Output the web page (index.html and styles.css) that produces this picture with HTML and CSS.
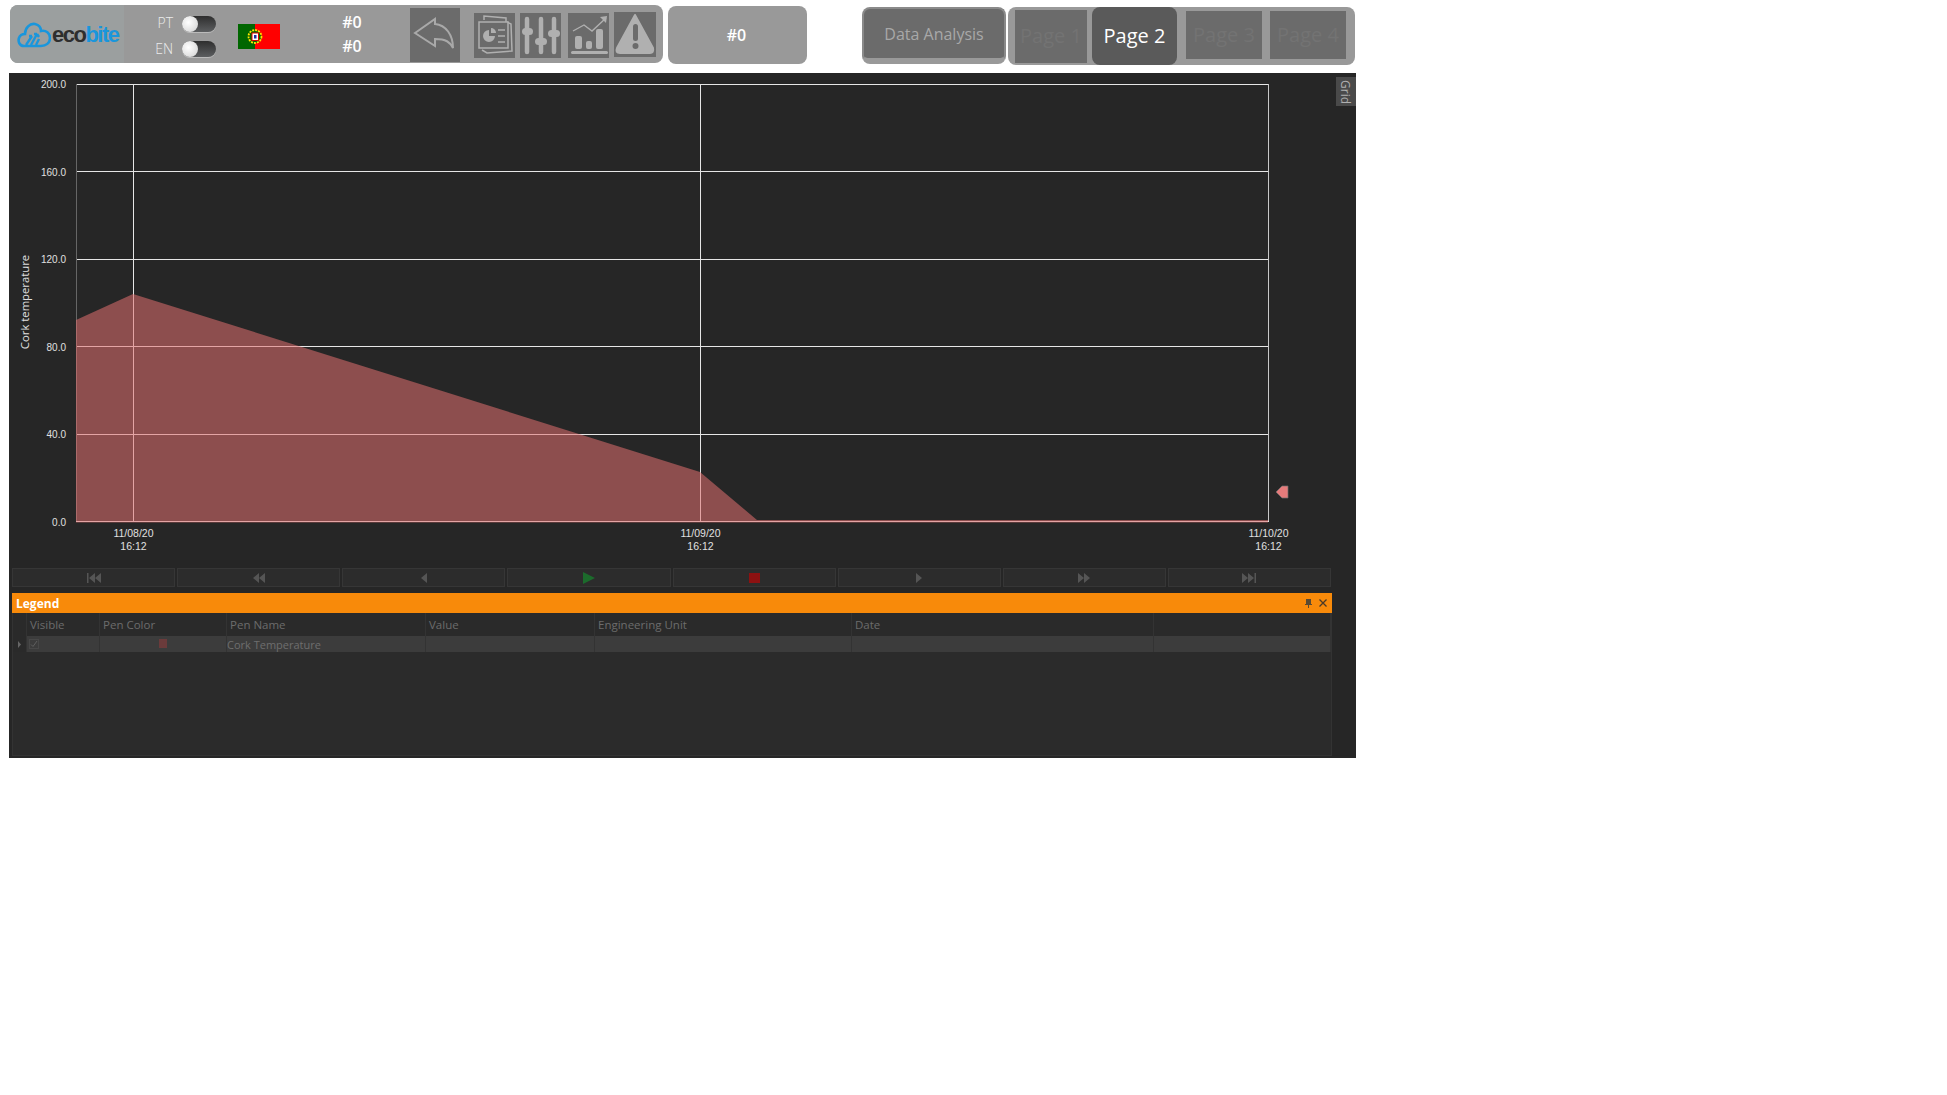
FILE: index.html
```html
<!DOCTYPE html>
<html lang="en">
<head>
    <meta charset="UTF-8">
    <title>Data Analysis</title>
    <link rel="stylesheet" href="styles.css">
</head>
<body>

    <div class="topbar">
        <div class="main-panel">
            <div class="logo">
                <svg class="cloud" width="34" height="26" viewBox="0 0 34 26">
                    <path d="M7 24 C2 24 1 19 2 16 C3 13 6 12 8 12 C8 6 13 1 18 2 C22 3 24 6 24 9 C29 8 33 11 33 16 C33 21 29 24 24 24 Z" fill="none" stroke="#1a96dc" stroke-width="2.6"/>
                    <path d="M9 23 L15 14 M14 23 L20 12 M19 23 L22 17 M15 14 L12 14 M20 12 L17 12 M20 12 L22 15" fill="none" stroke="#1a96dc" stroke-width="2.4"/>
                </svg>
                <span class="logo-text">eco<span class="logo-blue">bite</span></span>
            </div>

            <div class="lang">
                <span class="lang-label">PT</span><span class="toggle"></span>
                <span class="lang-label lang-label-en">EN</span><span class="toggle"></span>
            </div>

            <svg class="flag" width="42" height="25" viewBox="0 0 42 25">
                <rect width="42" height="25" fill="#ff0000"/>
                <rect width="17" height="25" fill="#006600"/>
                <circle cx="17" cy="12.500" r="6.500" fill="#006600" stroke="#ffe600" stroke-width="1.800" stroke-dasharray="2 1"/>
                <rect x="14" y="9" width="6.500" height="7.500" fill="#ffffff" stroke="#e00000"/>
                <rect x="16" y="11" width="2.500" height="3.500" fill="#2030a0"/>
            </svg>

            <div class="values">
                <span>#0</span>
                <span>#0</span>
            </div>

            <div class="tool tool-back">
                <svg width="50" height="54" viewBox="410 8 50 54">
                    <path d="M415 33 L435 19 L435 24 C446 25 453 35 453 48 C450 42 446 39 435 39 L435 46 Z" fill="none" stroke="#a9a9a9" stroke-width="2"/>
                </svg>
            </div>

            <div class="tool tool-slides">
                <svg width="41" height="45" viewBox="474 13 41 45">
                    <path d="M484 20 L484 16 L506 18 L506 22 M507 22 L511 24 L512 51 L487 53 L482 50" fill="none" stroke="#b0b0b0" stroke-width="1.5"/>
                    <rect x="479" y="22" width="29" height="26" fill="#6b6b6b" stroke="#b0b0b0" stroke-width="1.5"/>
                    <path d="M489 30 A6 6 0 1 0 495 36 L489 36 Z" fill="#b0b0b0"/>
                    <path d="M491 28 A5 5 0 0 1 496 33 L491 33 Z" fill="#b0b0b0"/>
                    <path d="M498 30 H505 M498 36 H505 M498 42 H505" stroke="#b0b0b0" stroke-width="1.5"/>
                </svg>
            </div>

            <div class="tool tool-sliders">
                <svg width="41" height="45" viewBox="520 13 41 45">
                    <path d="M527 19 V52 M541 19 V52 M554 19 V52" stroke="#b0b0b0" stroke-width="4.500" stroke-linecap="round"/>
                    <rect x="522" y="28" width="11" height="7" rx="3.500" fill="#b0b0b0"/>
                    <rect x="535" y="38" width="12" height="7" rx="3.500" fill="#b0b0b0"/>
                    <rect x="548" y="30" width="12" height="7" rx="3.500" fill="#b0b0b0"/>
                </svg>
            </div>

            <div class="tool tool-trend">
                <svg width="41" height="45" viewBox="568 13 41 45">
                    <path d="M573 31 L584 25 L592 31 L606 18" fill="none" stroke="#b0b0b0" stroke-width="1.400"/>
                    <path d="M600 17 L607 16 L606 23 Z" fill="#b0b0b0"/>
                    <rect x="575" y="36" width="7" height="13" rx="2" fill="#b0b0b0"/>
                    <rect x="586" y="41" width="6" height="8" rx="2" fill="#b0b0b0"/>
                    <rect x="596" y="29" width="7" height="20" rx="2" fill="#b0b0b0"/>
                    <rect x="571" y="51" width="37" height="3" rx="1.500" fill="#b0b0b0"/>
                </svg>
            </div>

            <div class="tool tool-warn">
                <svg width="42" height="45" viewBox="614 12 42 45">
                    <path d="M635 15 L653 48 Q654 53 650 53 L620 53 Q615 53 617 48 Z" fill="#b0b0b0" stroke="#b0b0b0" stroke-width="2" stroke-linejoin="round"/>
                    <rect x="633" y="24" width="5" height="17" rx="2.500" fill="#6b6b6b"/>
                    <circle cx="635.500" cy="46" r="3" fill="#6b6b6b"/>
                </svg>
            </div>
        </div>

        <div class="value-box">#0</div>

        <div class="analysis-btn">Data Analysis</div>

        <div class="pages">
            <div class="page page-1">Page 1</div>
            <div class="page page-active">Page 2</div>
            <div class="page page-3">Page 3</div>
            <div class="page page-4">Page 4</div>
        </div>
    </div>

    <div class="chart-panel">
        <div class="grid-tab">Grid</div>

        <svg class="chart" width="1347" height="490" viewBox="9 73 1347 490">
            <!-- grid lines -->
            <g stroke="#e6e6e6" stroke-width="1">
                <path d="M76 84.500 H1268 M76 171.500 H1268 M76 259.500 H1268 M76 346.500 H1268 M76 434.500 H1268"/>
                <path d="M133.500 84 V522 M700.500 84 V522"/>
            </g>
            <path d="M1268.500 84 V522" stroke="#c8c8c8"/>
            <path d="M76.500 84 V522" stroke="#666666"/>
            <path d="M76 521.500 H1269" stroke="#e6e6e6"/>

            <!-- pen area -->
            <polygon points="76,320 133,294 700,472 757,520 1268,520 1268,522.500 76,522.500" fill="#e27070" opacity="0.55"/>

            <polygon points="1276,492 1282,486 1288,486 1288,498 1282,498" fill="#e57b7b" stroke="#6e6e6e" stroke-width="0.7"/>

            <g class="y-labels">
                <text x="66" y="88">200.0</text>
                <text x="66" y="176">160.0</text>
                <text x="66" y="263">120.0</text>
                <text x="66" y="351">80.0</text>
                <text x="66" y="438">40.0</text>
                <text x="66" y="526">0.0</text>
            </g>

            <g class="x-labels">
                <text x="133.500" y="537">11/08/20</text>
                <text x="133.500" y="550">16:12</text>
                <text x="700.500" y="537">11/09/20</text>
                <text x="700.500" y="550">16:12</text>
                <text x="1268.500" y="537">11/10/20</text>
                <text x="1268.500" y="550">16:12</text>
            </g>

            <text class="y-title" transform="translate(28.500 302) rotate(-90)">Cork temperature</text>
        </svg>

        <div class="transport">
            <div class="transport-btn">
                <svg width="14" height="10" viewBox="0 0 14 10"><path d="M0 0 H1.500 V10 H0 Z M8 0 V10 L2 5 Z M14 0 V10 L8 5 Z" fill="#555555"/></svg>
            </div>
            <div class="transport-btn">
                <svg width="12" height="10" viewBox="0 0 12 10"><path d="M6 0 V10 L0 5 Z M12 0 V10 L6 5 Z" fill="#555555"/></svg>
            </div>
            <div class="transport-btn">
                <svg width="6" height="10" viewBox="0 0 6 10"><path d="M6 0 V10 L0 5 Z" fill="#555555"/></svg>
            </div>
            <div class="transport-btn">
                <svg width="12" height="12" viewBox="0 0 12 12"><path d="M0 0 L12 6 L0 12 Z" fill="#1c6b2c"/></svg>
            </div>
            <div class="transport-btn">
                <svg width="11" height="10" viewBox="0 0 11 10"><rect width="11" height="10" fill="#8c1111"/></svg>
            </div>
            <div class="transport-btn">
                <svg width="6" height="10" viewBox="0 0 6 10"><path d="M0 0 V10 L6 5 Z" fill="#555555"/></svg>
            </div>
            <div class="transport-btn">
                <svg width="12" height="10" viewBox="0 0 12 10"><path d="M0 0 V10 L6 5 Z M6 0 V10 L12 5 Z" fill="#555555"/></svg>
            </div>
            <div class="transport-btn">
                <svg width="14" height="10" viewBox="0 0 14 10"><path d="M0 0 V10 L6 5 Z M6 0 V10 L12 5 Z M12.500 0 H14 V10 H12.500 Z" fill="#555555"/></svg>
            </div>
        </div>

        <div class="legend">
            <div class="legend-title">
                <span>Legend</span>
                <svg class="legend-pin" width="7" height="9" viewBox="0 0 7 9"><path d="M1 0 H6 V5 H7 V6 H4 V9 H3 V6 H0 V5 H1 Z" fill="#5a4a32"/></svg>
                <svg class="legend-close" width="8" height="8" viewBox="0 0 8 8"><path d="M0.500 0.500 L7.500 7.500 M7.500 0.500 L0.500 7.500" stroke="#4a3a28" stroke-width="1.300"/></svg>
            </div>
            <div class="legend-row legend-head">
                <div class="cell"></div>
                <div class="cell">Visible</div>
                <div class="cell">Pen Color</div>
                <div class="cell">Pen Name</div>
                <div class="cell">Value</div>
                <div class="cell">Engineering Unit</div>
                <div class="cell">Date</div>
                <div class="cell"></div>
            </div>
            <div class="legend-row legend-data">
                <div class="cell cell-arrow">
                    <svg width="3" height="7" viewBox="0 0 3 7"><path d="M0 0 L3 3.500 L0 7 Z" fill="#666666"/></svg>
                </div>
                <div class="cell">
                    <span class="check">
                        <svg width="8" height="8" viewBox="0 0 8 8"><path d="M1 4.500 L3 6.500 L7 1" fill="none" stroke="#5f5f5f"/></svg>
                    </span>
                </div>
                <div class="cell cell-color"><span class="pen-swatch"></span></div>
                <div class="cell cell-name">Cork Temperature</div>
                <div class="cell"></div>
                <div class="cell"></div>
                <div class="cell"></div>
                <div class="cell"></div>
            </div>
        </div>
    </div>

</body>
</html>
```

FILE: styles.css
```css
body {
    margin: 0;
    background-color: #fff;
    font-family: "Open Sans", Arial, sans-serif;
}

/* top bar */
.topbar {
    display: flex;
    align-items: flex-start;
    box-sizing: border-box;
    height: 73px;
    padding: 5px 0 0 10px;
}
.main-panel {
    display: flex;
    align-items: flex-start;
    width: 653px;
    height: 58px;
    background-color: #999;
    border-radius: 8px;
}
.logo {
    display: flex;
    align-items: center;
    box-sizing: border-box;
    width: 114px;
    height: 58px;
    padding-left: 7px;
    background-color: #9b9f9f;
    border-radius: 8px 0 0 8px;
}
.cloud {
    flex: none;
    margin-top: 2px;
}
.logo-text {
    margin-left: 1px;
    margin-top: 1px;
    font-family: "Liberation Sans", Arial, sans-serif;
    font-size: 22px;
    font-weight: bold;
    letter-spacing: -1.500px;
    color: #2e2e2e;
}
.logo-blue {
    color: #1a96dc;
}
.lang {
    display: grid;
    grid-template-columns: 20px 34px;
    grid-auto-rows: 16px;
    column-gap: 9px;
    row-gap: 9px;
    margin: 11px 0 0 29px;
}
.lang-label {
    margin-top: -1px;
    font-size: 14px;
    font-weight: 300;
    line-height: 16px;
    text-align: right;
    color: #ececec;
}
.lang-label-en {
    margin-top: 0;
}
.toggle {
    position: relative;
    background: linear-gradient(#2e2e2e, #5c5e60);
    border-radius: 8px;
    box-shadow: 0 1px 0 #bbb;
}
.toggle::before {
    content: "";
    position: absolute;
    top: 0;
    left: 0;
    width: 16px;
    height: 16px;
    background: radial-gradient(circle at 40% 40%, #fff, #cfcfcf);
    border-radius: 50%;
}
.flag {
    flex: none;
    margin: 19px 0 0 22px;
}
.values {
    display: flex;
    flex-direction: column;
    width: 58px;
    margin: 5px 0 0 43px;
    font-size: 16px;
    font-weight: 600;
    line-height: 24px;
    text-align: center;
    color: #fff;
}
.tool {
    flex: none;
    background-color: #6b6b6b;
}
.tool svg {
    display: block;
}
.tool-back {
    width: 50px;
    height: 54px;
    margin: 3px 0 0 29px;
}
.tool-slides {
    width: 41px;
    height: 45px;
    margin: 8px 0 0 14px;
}
.tool-sliders {
    width: 41px;
    height: 45px;
    margin: 8px 0 0 5px;
}
.tool-trend {
    width: 41px;
    height: 45px;
    margin: 8px 0 0 7px;
}
.tool-warn {
    width: 42px;
    height: 45px;
    margin: 7px 0 0 5px;
}
.value-box {
    box-sizing: border-box;
    width: 139px;
    height: 58px;
    margin: 1px 0 0 5px;
    padding-right: 2px;
    background-color: #999;
    border-radius: 8px;
    font-size: 16px;
    font-weight: 600;
    line-height: 58px;
    text-align: center;
    color: #fff;
}
.analysis-btn {
    box-sizing: border-box;
    width: 144px;
    height: 57px;
    margin: 2px 0 0 55px;
    background-color: #6b6b6b;
    border: 2px solid #8a8a8a;
    border-bottom: 6px solid #999;
    border-radius: 8px;
    font-size: 16px;
    line-height: 51px;
    text-align: center;
    color: #a8a8a8;
}
.pages {
    display: flex;
    align-items: flex-start;
    width: 347px;
    height: 58px;
    margin: 2px 0 0 2px;
    background-color: #999;
    border-radius: 8px;
}
.page {
    flex: none;
    background-color: #6b6b6b;
    font-size: 20px;
    text-align: center;
    color: #737373;
}
.page-1 {
    width: 72px;
    height: 53px;
    margin: 3px 0 0 7px;
    line-height: 52px;
}
.page-active {
    width: 85px;
    height: 58px;
    margin-left: 5px;
    background-color: #5a5a5a;
    border-radius: 8px;
    line-height: 58px;
    color: #fff;
}
.page-3,
.page-4 {
    width: 76px;
    height: 48px;
    margin-top: 4px;
    line-height: 48px;
}
.page-3 {
    margin-left: 9px;
}
.page-4 {
    margin-left: 8px;
}

/* chart */
.chart-panel {
    position: relative;
    box-sizing: border-box;
    width: 1347px;
    height: 685px;
    margin-left: 9px;
    background-color: #262626;
}
.chart {
    display: block;
}
.grid-tab {
    position: absolute;
    top: 4px;
    right: 0;
    box-sizing: border-box;
    width: 20px;
    height: 29px;
    padding-right: 2px;
    background-color: #4a4a4a;
    writing-mode: vertical-rl;
    font-size: 12px;
    line-height: 18px;
    text-align: center;
    color: #b0b0b0;
}
.y-labels text {
    font-family: "Liberation Sans", Arial, sans-serif;
    font-size: 10px;
    text-anchor: end;
    fill: #e0e0e0;
}
.x-labels text {
    font-family: "Liberation Sans", Arial, sans-serif;
    font-size: 10.500px;
    text-anchor: middle;
    fill: #e0e0e0;
}
.y-title {
    font-size: 11.300px;
    text-anchor: middle;
    fill: #e0e0e0;
}

/* transport buttons */
.transport {
    display: grid;
    grid-template-columns: repeat(8, 1fr);
    gap: 2px;
    width: 1319px;
    height: 19px;
    margin: 5px 0 0 3px;
}
.transport-btn {
    display: flex;
    align-items: center;
    justify-content: center;
    background-color: #2c2c2c;
    border: 1px solid #363636;
}

/* legend */
.legend {
    box-sizing: border-box;
    width: 1320px;
    height: 163px;
    margin: 6px 0 0 3px;
    background-color: #2b2b2b;
    border: 1px solid #333;
    border-top: 0;
}
.legend-title {
    display: flex;
    align-items: center;
    height: 20px;
    margin: 0 -1px;
    padding: 0 5px 0 4px;
    background-color: #f88a0a;
    font-size: 12px;
    font-weight: bold;
    color: #fff;
}
.legend-title span {
    flex: 1;
}
.legend-close {
    margin-left: 7px;
}
.legend-row {
    display: grid;
    grid-template-columns: 14px 73px 127px 199px 169px 257px 302px 177px;
}
.legend-head {
    height: 23px;
    background-color: #2a2a2a;
    font-size: 11.500px;
    line-height: 23px;
    color: #6c6c6c;
}
.legend-head .cell {
    padding-left: 3px;
    border-right: 1px solid #333;
}
.legend-data {
    height: 16px;
    background-color: #3c3c3c;
    font-size: 11px;
    line-height: 17px;
    color: #6e6e6e;
}
.legend-data .cell {
    border-right: 1px solid #333;
}
.cell {
    box-sizing: border-box;
    overflow: hidden;
    white-space: nowrap;
}
.cell-arrow {
    display: flex;
    align-items: center;
    justify-content: center;
    background-color: #2a2a2a;
}
.check {
    display: flex;
    align-items: center;
    justify-content: center;
    width: 10px;
    height: 10px;
    margin: 3px 0 0 2px;
    border: 1px solid #484848;
    box-sizing: border-box;
}
.cell-color {
    display: flex;
    justify-content: center;
    padding-top: 3px;
}
.pen-swatch {
    width: 8px;
    height: 9px;
    background-color: #6b3b3b;
}
.cell-name {
    padding-left: 0;
}
```
